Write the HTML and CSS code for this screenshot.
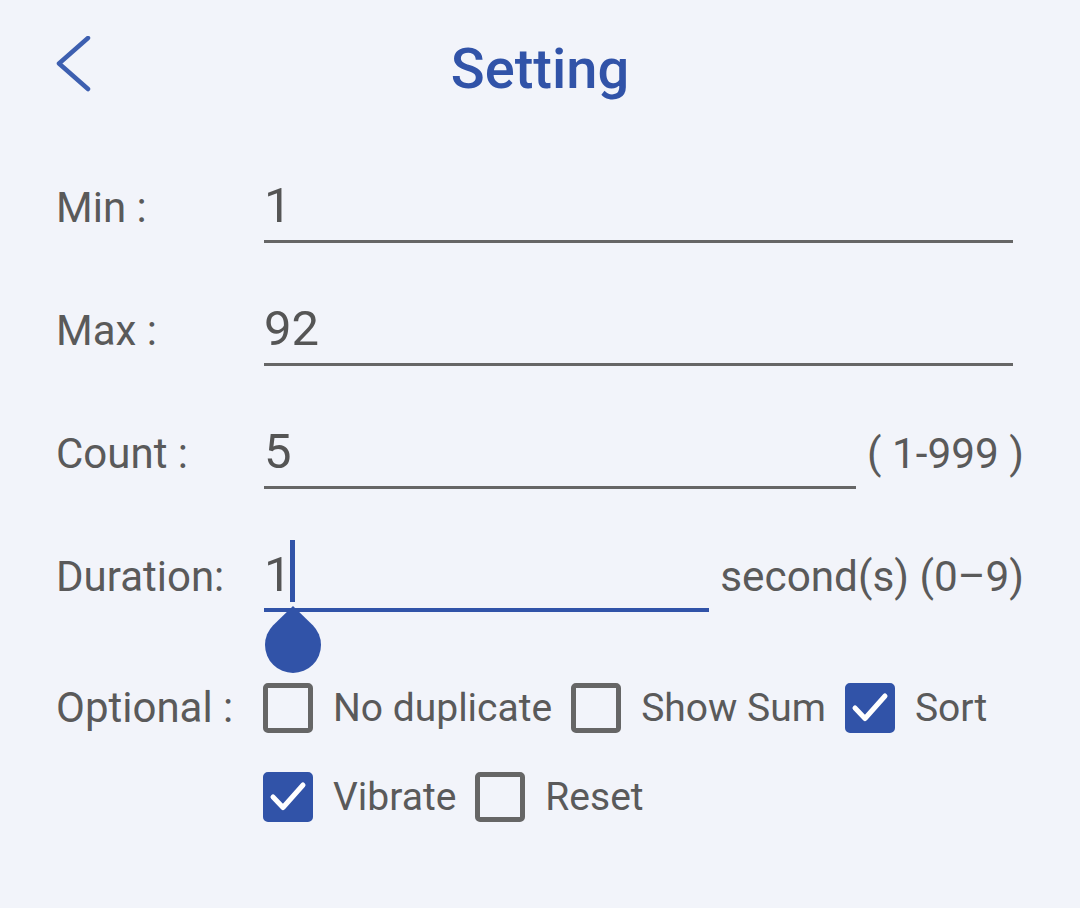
FILE: index.html
```html
<!DOCTYPE html>
<html>
<head>
<meta charset="utf-8">
<link rel="stylesheet" href="styles.css">
</head>
<body>
<div class="page">
  <header class="header">
    <svg class="back" width="36" height="56" viewBox="0 0 36 56"><polyline points="32,2 3,27.5 32,53" fill="none" stroke="#3d5fb0" stroke-width="4.5" stroke-linecap="round" stroke-linejoin="round"/></svg>
    <h1 class="title">Setting</h1>
    <div></div>
  </header>
  <div class="form">
    <div class="row">
      <div class="label">Min :</div>
      <div class="field field-wide">1</div>
    </div>
    <div class="row">
      <div class="label">Max :</div>
      <div class="field field-wide">92</div>
    </div>
    <div class="row">
      <div class="label">Count :</div>
      <div class="field">5</div>
      <div class="suffix">( 1-999 )</div>
    </div>
    <div class="row">
      <div class="label">Duration:</div>
      <div class="field field-active">1<span class="cursor"></span>
        <svg class="handle" width="56" height="68" viewBox="0 0 56 68"><path d="M28 1 L47.8 20.2 A28 28 0 1 1 8.2 20.2 Z" fill="#3153a8"/></svg>
      </div>
      <div class="suffix">second(s) (0–9)</div>
    </div>
    <div class="optional">
      <div class="label opt-label">Optional :</div>
      <div class="options">
        <div class="opt"><span class="box"></span><span class="opt-text">No duplicate</span></div>
        <div class="opt"><span class="box"></span><span class="opt-text">Show Sum</span></div>
        <div class="opt"><span class="box checked"><svg viewBox="0 0 50 50" width="50" height="50"><polyline points="10,25 20,35.5 40,13" fill="none" stroke="#fff" stroke-width="5" stroke-linecap="round" stroke-linejoin="round"/></svg></span><span class="opt-text">Sort</span></div>
        <div class="opt"><span class="box checked"><svg viewBox="0 0 50 50" width="50" height="50"><polyline points="10,25 20,35.5 40,13" fill="none" stroke="#fff" stroke-width="5" stroke-linecap="round" stroke-linejoin="round"/></svg></span><span class="opt-text">Vibrate</span></div>
        <div class="opt"><span class="box"></span><span class="opt-text">Reset</span></div>
      </div>
    </div>
  </div>
</div>
</body>
</html>
```

FILE: styles.css
```css
html, body {
  margin: 0;
  padding: 0;
  background: #f2f4fa;
}
body {
  font-family: Roboto, "Liberation Sans", sans-serif;
  color: #5a5a5a;
  width: 1080px;
  height: 908px;
  overflow: hidden;
}
.page {
  padding: 0 56px 0 56px;
}
.header {
  display: grid;
  grid-template-columns: 1fr auto 1fr;
  padding-top: 36px;
}
.back {
  display: block;
  margin-left: 0;
}
.title {
  margin: 0;
  font-size: 56px;
  font-weight: 500;
  line-height: 66px;
  color: #3153a8;
}
.form {
  padding-top: 75px;
  display: flex;
  flex-direction: column;
  gap: 57px;
}
.row {
  display: flex;
  align-items: baseline;
}
.label {
  width: 208px;
  flex: none;
  font-size: 42px;
  line-height: 48px;
}
.field {
  flex: 1;
  font-size: 49px;
  line-height: 57px;
  padding-bottom: 6px;
  border-bottom: 3px solid #666666;
  color: #555555;
  position: relative;
}
.field-wide {
  margin-right: 11px;
}
.field-active {
  border-bottom: 4px solid #3153a8;
  padding-bottom: 5px;
}
.cursor {
  position: absolute;
  left: 26px;
  top: -6px;
  width: 5px;
  height: 62px;
  background: #3153a8;
}
.handle {
  position: absolute;
  left: 1px;
  top: 59px;
}
.suffix {
  flex: none;
  margin-left: 11px;
  font-size: 42.3px;
  line-height: 48px;
}
.optional {
  display: flex;
  margin-top: 14px;
}
.opt-label {
  width: 207px;
  line-height: 50px;
}
.options {
  flex: 1;
  display: flex;
  flex-wrap: wrap;
  column-gap: 19px;
  row-gap: 39px;
}
.opt {
  display: flex;
  align-items: center;
  gap: 20px;
  height: 50px;
}
.box {
  width: 50px;
  height: 50px;
  box-sizing: border-box;
  border: 5px solid #666666;
  border-radius: 5px;
  display: block;
  position: relative;
}
.box.checked {
  background: #3153a8;
  border-color: #3153a8;
}
.box.checked svg {
  position: absolute;
  left: -5px;
  top: -5px;
}
.opt-text {
  font-size: 39px;
  line-height: 48px;
}
```
